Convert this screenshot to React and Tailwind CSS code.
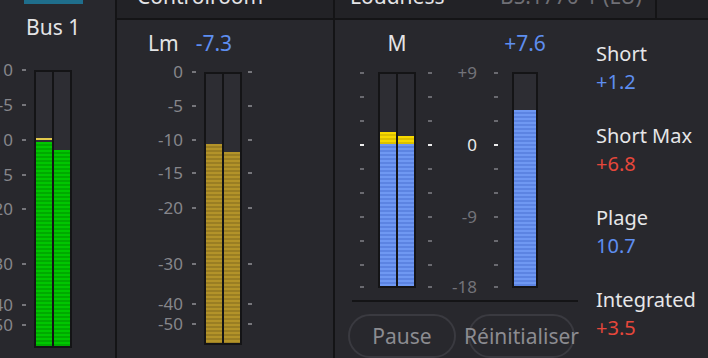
import React from 'react';

const GREEN = 'bg-[repeating-linear-gradient(to_bottom,#00c600_0px,#00c600_2px,#00a900_2px,#00a900_4px)]';
const GOLD = 'bg-[repeating-linear-gradient(to_bottom,#b39329_0px,#b39329_2px,#9a7e23_2px,#9a7e23_4px)]';
const BLUE = 'bg-[repeating-linear-gradient(to_bottom,#6f98f2_0px,#6f98f2_2px,#5c84e2_2px,#5c84e2_4px)]';
const YELLOW = 'bg-[repeating-linear-gradient(to_bottom,#f7d900_0px,#f7d900_2px,#dcc000_2px,#dcc000_4px)]';

const busMarks = [['0', 0], ['-5', 35], ['-10', 70], ['-15', 105], ['-20', 139], ['-30', 194], ['-40', 235], ['-50', 255]];
const ctrlMarks = [['0', 0], ['-5', 34], ['-10', 68], ['-15', 101], ['-20', 136], ['-30', 192], ['-40', 232], ['-50', 252]];
const luTicks = [0, 24, 48, 72, 96, 120, 144, 168, 192, 214];
const luLabels = [['+9', 0, false], ['0', 72, true], ['-9', 144, false], ['-18', 214, false]];

const stats = [
  { label: 'Short', value: '+1.2', color: 'text-[#5e8ef0]' },
  { label: 'Short Max', value: '+6.8', color: 'text-[#e6473b]' },
  { label: 'Plage', value: '10.7', color: 'text-[#5e8ef0]' },
  { label: 'Integrated', value: '+3.5', color: 'text-[#e6473b]' },
];

// dB scale with labels on the left of a meter
const DbScale = ({ marks, className }) => (
  <div className={`relative shrink-0 ${className}`}>
    {marks.map(([t, y]) => (
      <React.Fragment key={t}>
        <span
          className="absolute right-[21px] text-[17px] leading-none text-[#86868b] whitespace-nowrap"
          style={{ top: y - 9 }}
        >
          {t}
        </span>
        <span className="absolute right-[8px] w-[4px] h-[2px] bg-[#76767b]" style={{ top: y - 1 }} />
      </React.Fragment>
    ))}
  </div>
);

export default function App() {
  return (
    <div className="w-[708px] h-[358px] overflow-hidden flex bg-[#28282d] text-[#e4e4e6] font-['Noto_Sans',sans-serif]">
      {/* Bus 1 */}
      <div className="w-[115px] shrink-0 flex flex-col">
        <div className="ml-[24px] w-[59px] h-[4px] bg-[#1f6e8c]" />
        <div className="mt-[13px] pl-[26px] text-[21px] leading-none">Bus 1</div>
        <div className="mt-[32px] flex">
          <DbScale marks={busMarks} className="w-[34px] h-[278px]" />
          <div className="w-[38px] h-[278px] border-2 border-[#141416] bg-[#141416] flex gap-[2px]">
            <div className="flex-1 bg-[#2d2d33] flex flex-col justify-end">
              <div className="h-[2px] mb-[2px] bg-[#e2c94c]" />
              <div className={`h-[204px] ${GREEN}`} />
            </div>
            <div className="flex-1 bg-[#2d2d33] flex flex-col justify-end">
              <div className={`h-[196px] ${GREEN}`} />
            </div>
          </div>
        </div>
      </div>
      <div className="w-[2px] shrink-0 bg-[#141416]" />

      {/* Controlroom */}
      <div className="w-[216px] shrink-0 flex flex-col">
        <div className="h-[18px] bg-[#222226] overflow-hidden pl-[20px]">
          <div className="-mt-[14px] text-[21px] leading-none whitespace-nowrap">Controlroom</div>
        </div>
        <div className="h-[2px] bg-[#141416]" />
        <div className="mt-[13px] h-[21px] flex pl-[31px] text-[21px] leading-none">
          <span>Lm</span>
          <span className="ml-[17px] text-[#5e8ef0]">-7.3</span>
        </div>
        <div className="mt-[18px] flex">
          <DbScale marks={ctrlMarks} className="w-[87px] h-[273px]" />
          <div className="w-[38px] h-[273px] border-2 border-[#141416] bg-[#141416] flex gap-[2px]">
            <div className="flex-1 bg-[#2d2d33] flex flex-col justify-end">
              <div className={`h-[199px] ${GOLD}`} />
            </div>
            <div className="flex-1 bg-[#2d2d33] flex flex-col justify-end">
              <div className={`h-[191px] ${GOLD}`} />
            </div>
          </div>
          <div className="w-[10px] h-[273px] relative">
            {ctrlMarks.map(([t, y]) => (
              <span key={t} className="absolute left-[6px] w-[4px] h-[2px] bg-[#76767b]" style={{ top: y - 1 }} />
            ))}
          </div>
        </div>
      </div>
      <div className="w-[2px] shrink-0 bg-[#141416]" />

      {/* Loudness */}
      <div className="flex-1 flex flex-col">
        <div className="h-[18px] bg-[#222226] flex">
          <div className="w-[320px] overflow-hidden pl-[15px] flex">
            <span className="w-[150px] shrink-0 -mt-[14px] text-[21px] leading-none">Loudness</span>
            <span className="-mt-[14px] text-[21px] leading-none text-[#6f6f75] whitespace-nowrap">BS.1770-1 (LU)</span>
          </div>
          <div className="w-[2px] bg-[#141416]" />
        </div>
        <div className="h-[2px] bg-[#141416]" />

        <div className="flex">
          <div className="w-[261px] shrink-0 flex flex-col">
            <div className="mt-[13px] h-[21px] flex text-[21px] leading-none">
              <div className="w-[43px]" />
              <div className="w-[38px] flex justify-center">M</div>
              <div className="w-[96px]" />
              <div className="w-[26px] flex justify-center whitespace-nowrap text-[#5e8ef0]">+7.6</div>
            </div>

            <div className="mt-[18px] flex">
              <div className="w-[43px] h-[216px] relative">
                {luTicks.map((y) => (
                  <span
                    key={y}
                    className={`absolute left-[25px] w-[4px] h-[2px] ${y === 72 ? 'bg-[#ececec]' : 'bg-[#6a6a70]'}`}
                    style={{ top: y }}
                  />
                ))}
              </div>
              <div className="w-[38px] h-[216px] border-2 border-[#141416] bg-[#141416] flex gap-[2px]">
                <div className="flex-1 bg-[#2d2d33] flex flex-col justify-end">
                  <div className={`h-[12px] ${YELLOW}`} />
                  <div className={`h-[142px] ${BLUE}`} />
                </div>
                <div className="flex-1 bg-[#2d2d33] flex flex-col justify-end">
                  <div className={`h-[8px] ${YELLOW}`} />
                  <div className={`h-[142px] ${BLUE}`} />
                </div>
              </div>
              <div className="w-[96px] h-[216px] relative">
                {luTicks.map((y) => (
                  <React.Fragment key={y}>
                    <span
                      className={`absolute left-[12px] w-[4px] h-[2px] ${y === 72 ? 'bg-[#ececec]' : 'bg-[#6a6a70]'}`}
                      style={{ top: y }}
                    />
                    <span
                      className={`absolute left-[78px] w-[4px] h-[2px] ${y === 72 ? 'bg-[#ececec]' : 'bg-[#6a6a70]'}`}
                      style={{ top: y }}
                    />
                  </React.Fragment>
                ))}
                {luLabels.map(([t, y, hi]) => (
                  <span
                    key={t}
                    className={`absolute right-[35px] text-[17px] leading-none ${hi ? 'text-[#ececec]' : 'text-[#737379]'}`}
                    style={{ top: y - 8 }}
                  >
                    {t}
                  </span>
                ))}
              </div>
              <div className="w-[26px] h-[216px] border-2 border-[#141416] bg-[#141416] flex">
                <div className="flex-1 bg-[#2d2d33] flex flex-col justify-end">
                  <div className={`h-[176px] ${BLUE}`} />
                </div>
              </div>
            </div>

            <div className="mt-[12px] ml-[17px] w-[226px] h-[2px] bg-[#141416]" />

            <div className="mt-[12px] flex text-[21px] leading-none text-[#8c8c91]">
              <div className="ml-[13px] w-[108px] h-[44px] rounded-full border-2 border-[#3a3a40] flex items-center justify-center">
                Pause
              </div>
              <div className="ml-[12px] w-[107px] h-[44px] rounded-full border-2 border-[#3a3a40] flex items-center justify-center whitespace-nowrap">
                Réinitialiser
              </div>
            </div>
          </div>

          <div className="pt-[20px] flex flex-col gap-[26px]">
            {stats.map((s) => (
              <div key={s.label} className="text-[20px] leading-[28px] whitespace-nowrap">
                <div className="text-[#e6e6e8]">{s.label}</div>
                <div className={s.color}>{s.value}</div>
              </div>
            ))}
          </div>
        </div>
      </div>
    </div>
  );
}
